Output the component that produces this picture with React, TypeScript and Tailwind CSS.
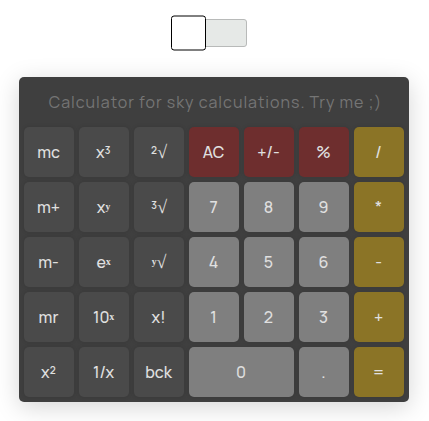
import { Fragment } from "react";

type Tone = "memory" | "clear" | "digit" | "operator";
type Key = { base?: string; root?: string; exp?: string; tone: Tone; wide?: boolean };

const tones: Record<Tone, string> = {
  memory: "bg-[#4a4a4a]",
  clear: "bg-[#6e2e2e]",
  digit: "bg-[#7f7f7f]",
  operator: "bg-[#8b7426]",
};

const m = (base: string, exp?: string): Key => ({ base, exp, tone: "memory" });
const r = (root: string): Key => ({ root, tone: "memory" });
const c = (base: string): Key => ({ base, tone: "clear" });
const d = (base: string, wide = false): Key => ({ base, wide, tone: "digit" });
const o = (base: string): Key => ({ base, tone: "operator" });

const rows: Key[][] = [
  [m("mc"), m("x³"), r("²"), c("AC"), c("+/-"), c("%"), o("/")],
  [m("m+"), m("x", "ʸ"), r("³"), d("7"), d("8"), d("9"), o("*")],
  [m("m-"), m("e", "ˣ"), r("ʸ"), d("4"), d("5"), d("6"), o("-")],
  [m("mr"), m("10", "ˣ"), m("x!"), d("1"), d("2"), d("3"), o("+")],
  [m("x²"), m("1/x"), m("bck"), d("0", true), d("."), o("=")],
];

function CalcKey({ base, root, exp, tone, wide }: Key) {
  const serif = "font-bold font-['Liberation_Serif','DejaVu_Serif',serif]";
  return (
    <button
      className={`flex h-[50px] items-center justify-center rounded-[5px] pr-px text-base font-medium leading-none text-[#e0e0e0] shadow-[0_0_4px_rgba(0,0,0,0.12)] ${tones[tone]} ${wide ? "col-span-2" : ""}`}
    >
      <span className="whitespace-nowrap">
        {base}
        {exp && <span className={`${serif} align-[-1px] leading-[0]`}>{exp}</span>}
        {root && (
          <>
            <span className={root === "ʸ" ? `${serif} align-[-1px] leading-[0]` : ""}>{root}</span>
            <span className={`${serif} text-[18px] leading-[0] tracking-[-1px]`}>√</span>
          </>
        )}
      </span>
    </button>
  );
}

export default function App() {
  return (
    <main className="flex h-[421px] w-[429px] flex-col overflow-hidden bg-white pl-[19px] pt-[15px] font-['Manrope','Inter',sans-serif]">
      <div className="ml-[152px] flex h-[35px] items-center">
        <div className="z-10 size-[35px] shrink-0 translate-y-[0.5px] rounded-[3px] border border-black bg-white" />
        <div className="-ml-1 h-7 w-[45px] rounded-[3px] border border-[#b8bab9] bg-[#e6e9e7]" />
      </div>
      <section className="mt-[27px] flex h-[325px] w-[390px] shrink-0 flex-col gap-[5px] rounded-[5px] bg-[#3f3f3f] p-[5px] shadow-[0_5px_25px_rgba(0,0,0,0.17)]">
        <div className="flex h-10 items-center justify-center whitespace-nowrap pl-[3px] text-base font-normal tracking-[0.98px] text-[#757575]">
          Calculator for sky calculations. Try me ;)
        </div>
        <div className="grid grid-cols-7 gap-[5px]">
          {rows.map((row, i) => (
            <Fragment key={i}>
              {row.map((key, j) => (
                <CalcKey key={j} {...key} />
              ))}
            </Fragment>
          ))}
        </div>
      </section>
    </main>
  );
}
